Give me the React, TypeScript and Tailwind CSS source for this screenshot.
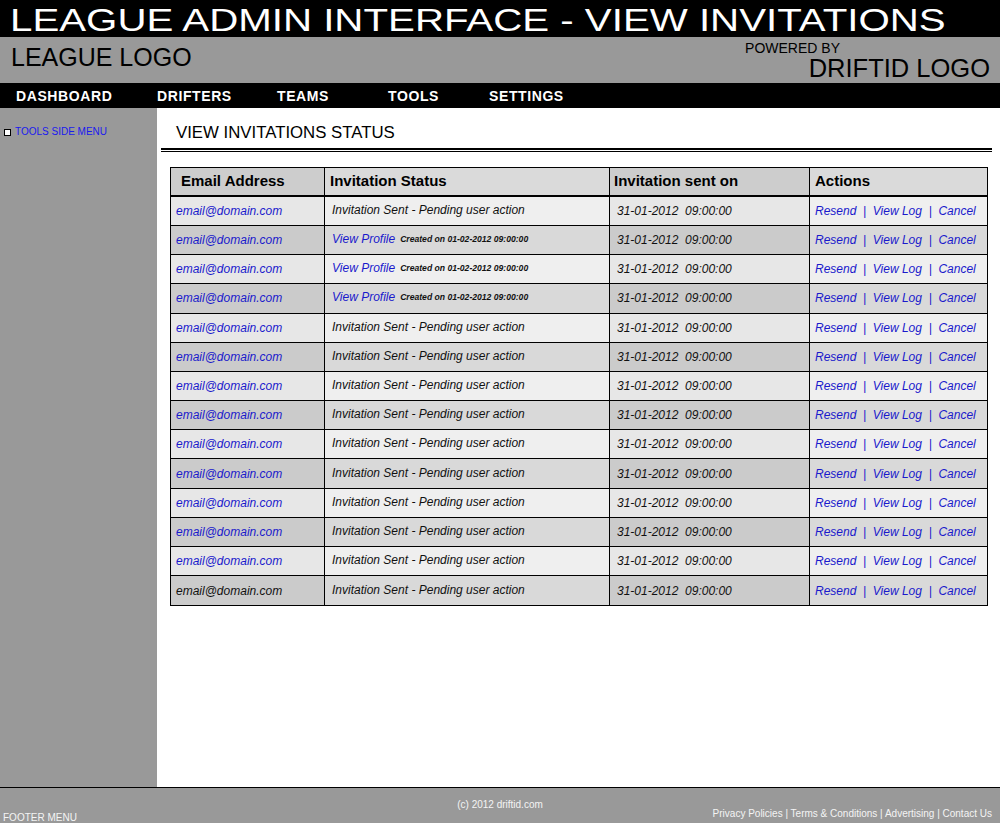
import React from 'react';

const rows = [
  { status: 'sent' },
  { status: 'profile' },
  { status: 'profile' },
  { status: 'profile' },
  { status: 'sent' },
  { status: 'sent' },
  { status: 'sent' },
  { status: 'sent' },
  { status: 'sent' },
  { status: 'sent' },
  { status: 'sent' },
  { status: 'sent' },
  { status: 'sent' },
  { status: 'sent', plain: true },
];

const navItems = [
  { label: 'DASHBOARD', w: 'w-[141px]' },
  { label: 'DRIFTERS', w: 'w-[120px]' },
  { label: 'TEAMS', w: 'w-[111px]' },
  { label: 'TOOLS', w: 'w-[101px]' },
  { label: 'SETTINGS', w: 'w-[110px]' },
];

const App = () => {
  return (
    <div className="w-[1000px] h-[823px] flex flex-col bg-white overflow-hidden font-['Liberation_Sans',Arial,sans-serif]">
      {/* title bar */}
      <div className="h-[37px] bg-black text-white flex items-center pl-[10px] pt-[3px] overflow-hidden">
        <span className="inline-block origin-left scale-x-[1.258] text-[32px] leading-none whitespace-nowrap">
          LEAGUE ADMIN INTERFACE - VIEW INVITATIONS
        </span>
      </div>

      {/* logo band */}
      <div className="h-[46px] bg-[#999999] flex justify-between text-black">
        <div className="pl-[11px] pt-[8px] text-[25px] leading-none">LEAGUE LOGO</div>
        <div className="flex flex-col items-end pr-[10px] pt-[4px]">
          <div className="text-[14px] leading-none mr-[150px]">POWERED BY</div>
          <div className="text-[25.5px] leading-none mt-[1px]">DRIFTID LOGO</div>
        </div>
      </div>

      {/* nav */}
      <div className="h-[25px] bg-black flex items-center pl-[16px]">
        {navItems.map((n) => (
          <div key={n.label} className={`${n.w} text-white font-bold text-[14px] tracking-[0.6px] leading-none`}>
            {n.label}
          </div>
        ))}
      </div>

      <div className="flex-1 flex">
        {/* side menu */}
        <div className="w-[157px] bg-[#999999] pt-[19px] pl-[4px]">
          <div className="flex items-center gap-[4px]">
            <span className="w-[7px] h-[7px] border border-black bg-white"></span>
            <span className="text-[10px] leading-none text-[#1a1aee]">TOOLS SIDE MENU</span>
          </div>
        </div>

        {/* main */}
        <div className="flex-1 bg-white pt-[17px]">
          <h1 className="pl-[19px] text-[16.8px] leading-none text-black">VIEW INVITATIONS STATUS</h1>
          <div className="ml-[4px] mr-[8px] mt-[6px] h-[4px] border-t-2 border-b border-black"></div>

          <div className="ml-[13px] mr-[12px] mt-[15px] border border-black text-[12px]">
            <div className="grid grid-cols-[154px_285px_200px_1fr] h-[29px] border-b-2 border-black font-bold text-[15px] text-black">
              <div className="bg-[#cdcdcd] border-r border-black flex items-center pl-[10px]">Email Address</div>
              <div className="bg-[#dadada] border-r border-black flex items-center pl-[5px]">Invitation Status</div>
              <div className="bg-[#cdcdcd] border-r border-black flex items-center pl-[4px]">Invitation sent on</div>
              <div className="bg-[#dadada] flex items-center pl-[5px]">Actions</div>
            </div>
            {rows.map((r, i) => {
              const even = i % 2 === 1;
              const dark = even ? 'bg-[#cbcbcb]' : 'bg-[#e7e7e7]';
              const light = even ? 'bg-[#d9d9d9]' : 'bg-[#efefef]';
              return (
                <div
                  key={i}
                  className={`grid grid-cols-[154px_285px_200px_1fr] h-[29.2px] italic ${i < rows.length - 1 ? 'border-b border-black' : ''}`}
                >
                  <div className={`${dark} border-r border-black flex items-center pl-[5px] ${r.plain ? 'text-[#111]' : 'text-[#1a1acc]'}`}>
                    email@domain.com
                  </div>
                  <div className={`${light} border-r border-black flex items-center pl-[7px] pb-[2px]`}>
                    {r.status === 'sent' ? (
                      <span className="text-[#111]">Invitation Sent - Pending user action</span>
                    ) : (
                      <span className="flex items-center">
                        <span className="text-[#1a1acc]">View Profile</span>
                        <span className="ml-[5px] text-[8.6px] font-bold text-[#111]">
                          Created on 01-02-2012 09:00:00
                        </span>
                      </span>
                    )}
                  </div>
                  <div className={`${dark} border-r border-black flex items-center pl-[7px] text-[#111] whitespace-pre`}>
                    {'31-01-2012  09:00:00'}
                  </div>
                  <div className={`${light} flex items-center pl-[5px] text-[#1a1acc] whitespace-pre`}>
                    {'Resend  |  View Log  |  Cancel'}
                  </div>
                </div>
              );
            })}
          </div>
        </div>
      </div>

      {/* footer */}
      <div className="h-[36px] bg-[#999999] border-t border-black text-[10px] text-[#f4f4f4] leading-none">
        <div className="text-center pt-[12px]">(c) 2012 driftid.com</div>
        <div className="flex justify-between items-start pl-[3px] pr-[8px] mt-[-1px]">
          <span className="mt-[4px]">FOOTER MENU</span>
          <span>Privacy Policies | Terms &amp; Conditions | Advertising | Contact Us</span>
        </div>
      </div>
    </div>
  );
};

export default App;
